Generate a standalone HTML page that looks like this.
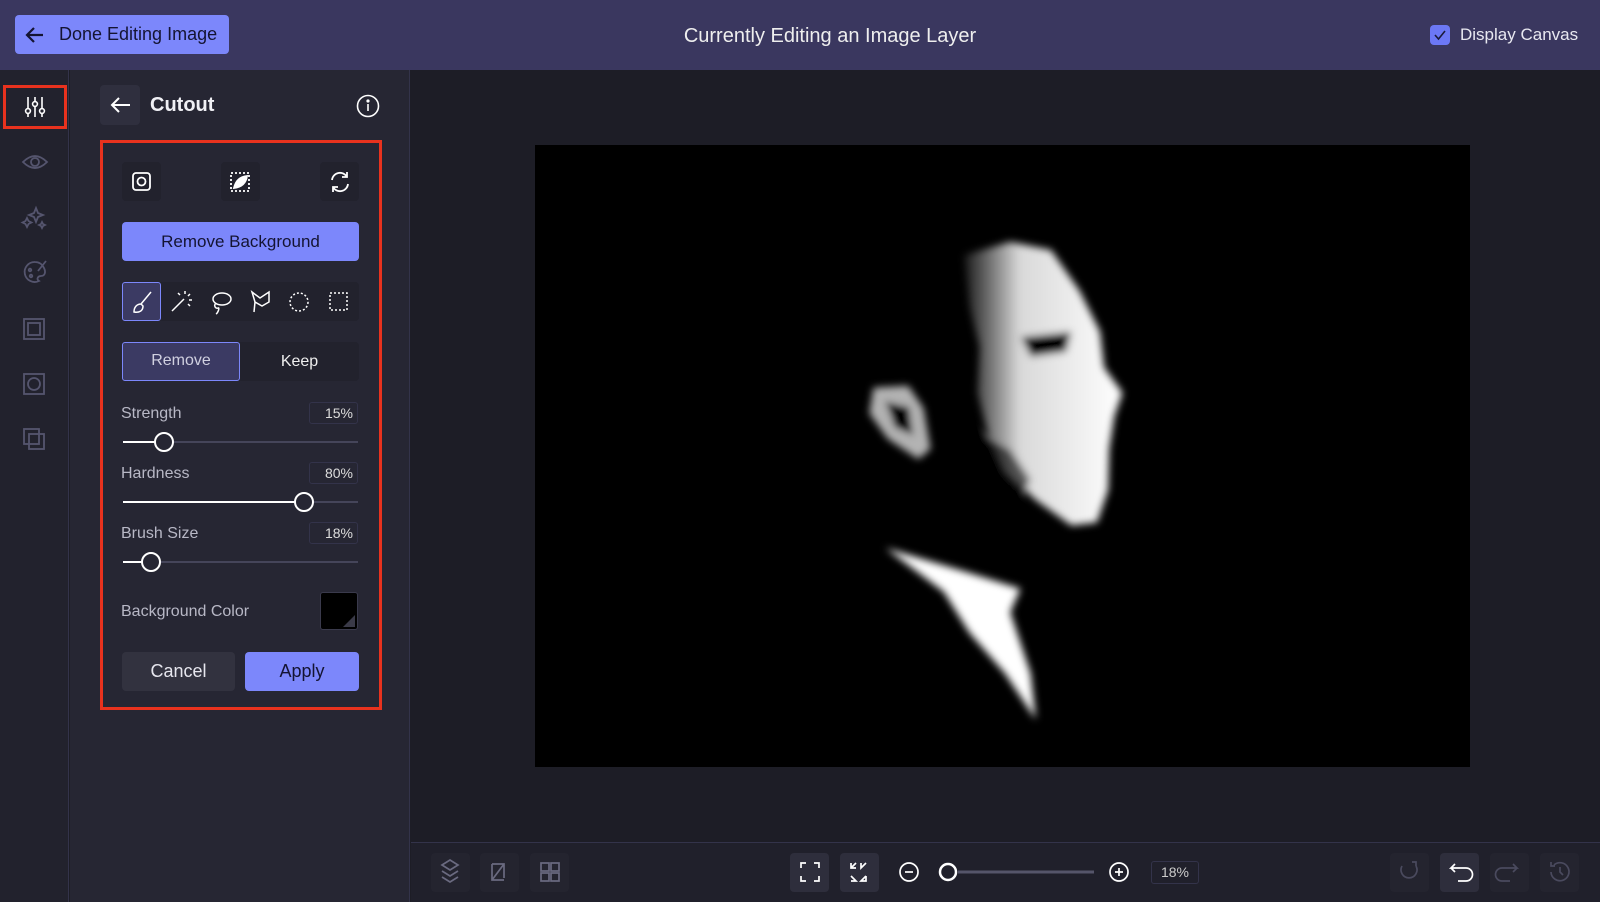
<!DOCTYPE html>
<html><head><meta charset="utf-8"><style>
*{box-sizing:border-box;margin:0;padding:0}
body{width:1600px;height:902px;overflow:hidden;background:#1d1d26;font-family:"Liberation Sans",sans-serif;color:#e6e6ee;position:relative}
.abs{position:absolute}
.hdr{left:0;top:0;width:1600px;height:70px;background:#3a375f}
.done{left:15px;top:15px;width:214px;height:39px;background:#7c87fb;border-radius:4px;color:#141432;font-size:18px;display:flex;align-items:center;padding-left:44px}
.rail{left:0;top:70px;width:69px;height:832px;background:#22222d;border-right:1px solid #33334a}
.panel{left:70px;top:70px;width:340px;height:832px;background:#262633;border-right:1px solid #33334a}
.btn{background:#2f2f3e;border-radius:4px}
.lbl{font-size:16px;color:#b8b8c6}
.val{border:1px solid #33334a;border-radius:3px;font-size:14px;color:#ddd;text-align:right;padding-right:4px;line-height:20px;height:22px;width:49px}
.track{height:2px;background:#45455a}
.fill{height:2px;background:#fff}
.knob{width:20px;height:20px;border-radius:50%;border:2.5px solid #fff;background:#262633}
.tb{width:39px;height:39px;background:#24242f;border-radius:4px}
svg{overflow:visible}
</style></head><body>
<div class="abs hdr"></div>
<div class="abs done">Done Editing Image</div>
<svg class="abs" style="left:25px;top:26px" width="20" height="18"><path d="M18 9H3M9 2L2 9l7 7" stroke="#141432" stroke-width="2.2" fill="none"/></svg>
<div class="abs" style="left:0;width:1660px;top:25px;text-align:center;font-size:20px;color:#eee">Currently Editing an Image Layer</div>
<div class="abs" style="left:1430px;top:25px;width:20px;height:20px;background:#6c78f5;border-radius:4px"></div>
<svg class="abs" style="left:1433px;top:28px" width="14" height="14"><path d="M2 7l3.5 4L12 3" stroke="#1b1b3a" stroke-width="1.6" fill="none"/></svg>
<div class="abs" style="left:1460px;top:25px;font-size:17px;color:#e8e8f0">Display Canvas</div>

<div class="abs rail"></div>
<div class="abs" style="left:3px;top:85px;width:64px;height:44px;border:3px solid #e8321e"></div>
<svg class="abs" style="left:24px;top:96px" width="22" height="22" fill="none" stroke="#fff" stroke-width="1.6"><path d="M4 1v20M11 1v20M18 1v20"/><circle cx="4" cy="15" r="2.4" fill="#22222d"/><circle cx="11" cy="8" r="2.4" fill="#22222d"/><circle cx="18" cy="15" r="2.4" fill="#22222d"/></svg>
<svg class="abs" style="left:22px;top:150px" width="26" height="300" fill="none" stroke="#55556e" stroke-width="1.8">
<path d="M1 12q12-12 24 0q-12 12-24 0z"/><circle cx="13" cy="12" r="4"/>
<path d="M14 58l2 5 5 2-5 2-2 5-2-5-5-2 5-2zM5 68l1.5 3 3 1.5-3 1.5-1.5 3-1.5-3-3-1.5 3-1.5zM20 72l1 2 2 1-2 1-1 2-1-2-2-1 2-1z"/>
<path d="M13 112a10 10 0 1 0 4 19c-3-2-1-5 2-5 4 0 5-4 3-8-2-4-5-6-9-6z"/><circle cx="8" cy="120" r="1.3"/><circle cx="9" cy="126" r="1.3"/><path d="M24 111l-8 10"/>
<rect x="2" y="169" width="20" height="20"/><rect x="6" y="173" width="12" height="12"/>
<rect x="2" y="224" width="20" height="20"/><circle cx="12" cy="234" r="6"/>
<rect x="2" y="279" width="15" height="15"/><rect x="7" y="284" width="15" height="15"/>
</svg>

<div class="abs panel"></div>
<div class="abs btn" style="left:100px;top:85px;width:40px;height:40px"></div>
<svg class="abs" style="left:111px;top:97px" width="20" height="16"><path d="M19 8H2M8 1L1 8l7 7" stroke="#fff" stroke-width="2" fill="none"/></svg>
<div class="abs" style="left:150px;top:94px;font-size:20px;font-weight:bold;color:#f0f0f5">Cutout</div>
<svg class="abs" style="left:356px;top:94px" width="24" height="24" fill="none" stroke="#fff" stroke-width="1.6"><circle cx="12" cy="12" r="10.5"/><path d="M12 10v7"/><circle cx="12" cy="7" r="0.8" fill="#fff"/></svg>
<div class="abs" style="left:100px;top:140px;width:282px;height:570px;border:3px solid #e8321e"></div>

<div class="abs tb" style="left:122px;top:162px;background:#22222d"></div>
<div class="abs tb" style="left:221px;top:162px;background:#22222d"></div>
<div class="abs tb" style="left:320px;top:162px;background:#22222d"></div>
<svg class="abs" style="left:131px;top:171px" width="22" height="22" fill="none" stroke="#fff" stroke-width="1.8"><rect x="2" y="2" width="17" height="17" rx="3"/><circle cx="10.5" cy="10.5" r="4"/></svg>
<svg class="abs" style="left:229px;top:171px" width="22" height="22" fill="none" stroke="#fff" stroke-width="1.8"><rect x="2" y="2" width="18" height="18" stroke-dasharray="2 2"/><path d="M5 17c2-8 6-11 13-12-1 7-5 11-13 12z" fill="#fff"/></svg>
<svg class="abs" style="left:328px;top:170px" width="24" height="24" fill="none" stroke="#fff" stroke-width="1.8"><path d="M4 10a8 8 0 0 1 15-3M20 14a8 8 0 0 1-15 3M19 2v5h-5M5 22v-5h5"/></svg>

<div class="abs" style="left:122px;top:222px;width:237px;height:39px;background:#7c87fb;border-radius:4px;color:#141432;font-size:17px;text-align:center;line-height:39px">Remove Background</div>

<div class="abs" style="left:122px;top:282px;width:237px;height:39px;background:#22222d;border-radius:4px"></div>
<div class="abs" style="left:122px;top:282px;width:39px;height:39px;background:#3b3a63;border:1.5px solid #7c87fb;border-radius:3px"></div>
<svg class="abs" style="left:122px;top:282px" width="237" height="39" fill="none" stroke="#fff" stroke-width="1.5">
<path d="M29 10l-10 12M12 30c0-5 3-8 7-8l2 2c0 5-4 7-9 6z"/>
<path d="M50 29l12-12M63 9v3M68 12l-2 2M70 18h-3M58 13l-2-2M68 24l-2-2" />
<ellipse cx="100" cy="17" rx="9" ry="6"/><path d="M94 21c-3 3 0 6 2 5s0 5-2 6"/>
<path d="M130 10l8 6 9-6v10l-7 4-7-4zM133 20l-1 10"/>
<circle cx="177" cy="20" r="9" stroke-dasharray="2 2"/>
<rect x="208" y="11" width="17" height="17" stroke-dasharray="2 2"/>
</svg>

<div class="abs" style="left:122px;top:342px;width:237px;height:39px;background:#22222d;border-radius:4px"></div>
<div class="abs" style="left:122px;top:342px;width:118px;height:39px;background:#3b3a63;border:1.5px solid #7c87fb;border-radius:3px;text-align:center;line-height:36px;font-size:16px;color:#d0d0e0">Remove</div>
<div class="abs" style="left:240px;top:342px;width:119px;height:39px;text-align:center;line-height:39px;font-size:16px;color:#eee">Keep</div>

<div class="abs lbl" style="left:121px;top:405px">Strength</div>
<div class="abs val" style="left:309px;top:402px">15%</div>
<div class="abs track" style="left:123px;top:441px;width:235px"></div>
<div class="abs fill" style="left:123px;top:441px;width:40px"></div>
<div class="abs knob" style="left:154px;top:432px"></div>

<div class="abs lbl" style="left:121px;top:465px">Hardness</div>
<div class="abs val" style="left:309px;top:462px">80%</div>
<div class="abs track" style="left:123px;top:501px;width:235px"></div>
<div class="abs fill" style="left:123px;top:501px;width:180px"></div>
<div class="abs knob" style="left:294px;top:492px"></div>

<div class="abs lbl" style="left:121px;top:525px">Brush Size</div>
<div class="abs val" style="left:309px;top:522px">18%</div>
<div class="abs track" style="left:123px;top:561px;width:235px"></div>
<div class="abs fill" style="left:123px;top:561px;width:28px"></div>
<div class="abs knob" style="left:141px;top:552px"></div>

<div class="abs lbl" style="left:121px;top:603px">Background Color</div>
<div class="abs" style="left:320px;top:592px;width:38px;height:38px;background:#000;border:1px solid #3a3a4c;border-radius:3px;overflow:hidden"><div style="position:absolute;right:2px;bottom:2px;width:0;height:0;border-left:12px solid transparent;border-bottom:12px solid #3a3a48"></div></div>

<div class="abs" style="left:122px;top:652px;width:113px;height:39px;background:#32323f;border-radius:4px;text-align:center;line-height:39px;font-size:18px;color:#e6e6ee">Cancel</div>
<div class="abs" style="left:245px;top:652px;width:114px;height:39px;background:#7c87fb;border-radius:4px;text-align:center;line-height:39px;font-size:18px;color:#141432">Apply</div>

<div class="abs" style="left:535px;top:145px;width:935px;height:622px;background:#000"></div>
<svg class="abs" style="left:0;top:0" width="1600" height="902">
<defs><filter id="b"><feGaussianBlur stdDeviation="4"/></filter>
<linearGradient id="g" x1="0" x2="1" y1="0" y2="0"><stop offset="0" stop-color="#fff" stop-opacity="0.1"/><stop offset="0.35" stop-color="#fff" stop-opacity="0.85"/><stop offset="1" stop-color="#fff"/></linearGradient></defs>
<g transform="scale(1.0204)" filter="url(#b)">
<path fill="url(#g)" d="M945 250L990 237L1030 245L1058 285L1078 325L1082 360L1100 385L1092 408L1087 440L1086 480L1075 512L1050 515L1015 490L985 462L968 425L958 385L960 340L950 300Z"/>
<path d="M1000 330L1050 325L1045 345L1010 350Z" fill="#000"/>
<path d="M955 420L990 440L1010 470L1000 490L975 460Z" fill="#000" opacity=".6"/>
<path fill="#fff" opacity=".7" d="M856 380L890 378L905 400L912 440L900 450L870 430L852 405Z"/>
<path d="M866 392L892 398L896 428L876 420Z" fill="#000"/>
<path fill="#fff" d="M868 537L945 560L1000 577L990 600L1010 660L1015 705L985 660L950 620L925 580Z"/>
</g>
</svg>

<div class="abs" style="left:411px;top:842px;width:1189px;height:60px;background:#20202b;border-top:1px solid #33334a"></div>
<div class="abs tb" style="left:431px;top:853px"></div>
<div class="abs tb" style="left:480px;top:853px"></div>
<div class="abs tb" style="left:530px;top:853px"></div>
<div class="abs tb" style="left:790px;top:853px;background:#2e2e3c"></div>
<div class="abs tb" style="left:840px;top:853px;background:#2e2e3c"></div>
<div class="abs tb" style="left:1390px;top:853px"></div>
<div class="abs tb" style="left:1440px;top:853px;background:#2e2e3c"></div>
<div class="abs tb" style="left:1490px;top:853px"></div>
<div class="abs tb" style="left:1540px;top:853px"></div>
<svg class="abs" style="left:0;top:0" width="1600" height="902" fill="none" stroke-width="1.7">
<g stroke="#6a6a80"><path d="M442 865l8-5 8 5-8 5zM442 871l8 5 8-5M442 877l8 5 8-5"/><path d="M492 864h12v14M492 864v16h12M492 880l12-16"/><rect x="541" y="863" width="8" height="8"/><rect x="551" y="863" width="8" height="8"/><rect x="541" y="873" width="8" height="8"/><rect x="551" y="873" width="8" height="8"/></g>
<g stroke="#fff"><path d="M801 868v-5h5M814 863h5v5M801 876v5h5M814 881h5v-5"/><path d="M851 863v5h5M851 868l5-5M866 863l-5 5v-5M851 881h5l-5-5M866 876v5h-5l5-5"/>
<circle cx="909" cy="872" r="9"/><path d="M905 872h8"/><line x1="958" y1="872" x2="1094" y2="872" stroke="#55556a" stroke-width="3"/><circle cx="948" cy="872" r="8" fill="#20202b" stroke-width="2.5"/>
<circle cx="1119" cy="872" r="9"/><path d="M1115 872h8M1119 868v8"/>
<path d="M1466 868h-15l4-4M1451 868l4 4M1466 868a6 6 0 0 1 0 13h-8"/></g>
<g stroke="#4a4a5e"><path d="M1402 866a8 8 0 1 0 14 0M1416 866v-4h-4"/><path d="M1502 868h15l-4-4M1517 868l-4 4M1502 868a6 6 0 0 0 0 13h8"/><path d="M1551 872a9 9 0 1 0 3-7M1551 862v4h4M1560 867v5l3 3"/></g>
</svg>
<div class="abs" style="left:1151px;top:861px;width:48px;height:23px;border:1px solid #33334a;border-radius:3px;font-size:14px;text-align:center;line-height:21px;color:#ccc">18%</div>
</body></html>
